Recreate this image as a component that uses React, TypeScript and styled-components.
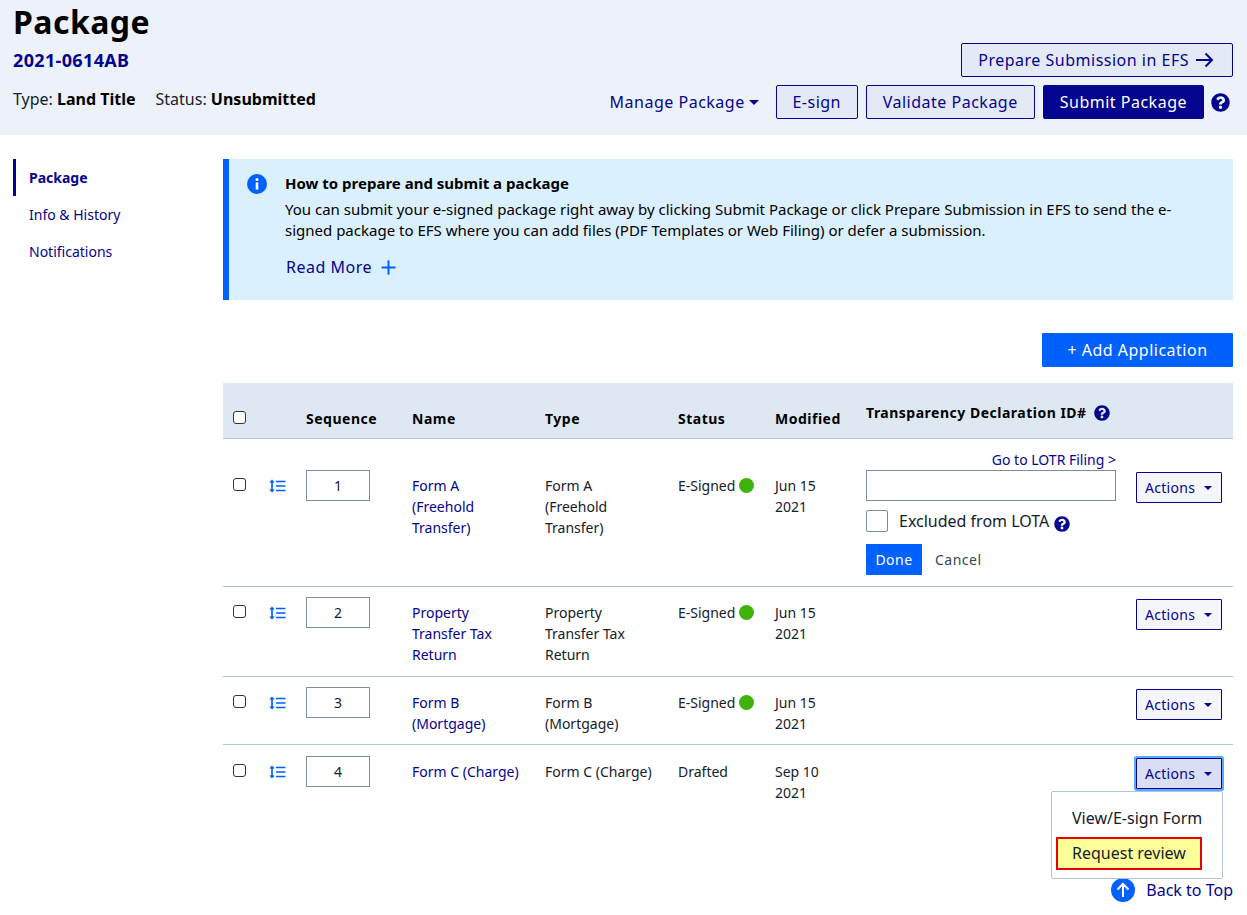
import styled, { createGlobalStyle } from 'styled-components';
import { Plus } from 'lucide-react';
import { FaQuestionCircle } from 'react-icons/fa';

const navy = '#04048f';
const blue = '#0061ff';
const rule = '#aec6d8';

const GlobalStyle = createGlobalStyle`
  html, body { margin: 0; padding: 0; background: #fff; }
  body {
    font-family: "Noto Sans", "Liberation Sans", sans-serif;
    font-size: 14px;
    line-height: 21px;
    color: #15202b;
    overflow: hidden;
  }
  * { box-sizing: border-box; }
`;

const Page = styled.div`
  width: 1247px;
  height: 915px;
`;

const Header = styled.header`
  display: flex;
  justify-content: space-between;
  height: 135px;
  padding: 0 14px 0 13px;
  background: #edf2fa;
`;

const Title = styled.h1`
  margin: 0;
  font-size: 32px;
  line-height: 44px;
  font-weight: 700;
  letter-spacing: 0.45px;
  color: #000;
`;

const PackageId = styled.div`
  margin-top: 4px;
  font-size: 18px;
  line-height: 24px;
  font-weight: 700;
  letter-spacing: 0.35px;
  color: ${navy};
`;

const Meta = styled.div`
  display: flex;
  gap: 20px;
  margin-top: 15px;
  font-size: 16px;
  line-height: 24px;
  color: #15202b;
  b { color: #000; }
`;

const HeaderActions = styled.div`
  display: flex;
  flex-direction: column;
  align-items: flex-end;
  gap: 8px;
  padding-top: 43px;
`;

const ButtonRow = styled.div`
  display: flex;
  align-items: center;
  gap: 8px;
`;

const Button = styled.button<{ $solid?: boolean }>`
  display: inline-flex;
  align-items: center;
  justify-content: center;
  gap: 7px;
  height: 34px;
  padding: 0 16px;
  border: 1px solid ${navy};
  border-radius: 2px;
  background: ${(p) => (p.$solid ? navy : '#e4eaf5')};
  color: ${(p) => (p.$solid ? '#fff' : navy)};
  font: inherit;
  font-size: 16px;
  letter-spacing: 0.5px;
`;

const ESignButton = styled(Button)`
  width: 82px;
  padding: 0;
`;

const Caret = styled.span`
  display: inline-block;
  width: 0;
  height: 0;
  border-left: 5px solid transparent;
  border-right: 5px solid transparent;
  border-top: 5px solid currentColor;
`;

const ManageLink = styled.a`
  display: inline-flex;
  align-items: center;
  gap: 4px;
  margin-right: 9px;
  color: ${navy};
  font-size: 16px;
  letter-spacing: 0.5px;
`;

const HelpIcon = styled(FaQuestionCircle)<{ $size: number }>`
  flex: none;
  width: ${(p) => p.$size}px;
  height: ${(p) => p.$size}px;
  color: ${navy};
`;

const MainHelp = styled.span`
  display: inline-flex;
  margin: 0 3px 0 -1px;
`;

const Body = styled.div`
  display: flex;
  padding: 24px 14px 0 13px;
`;

const Sidebar = styled.nav`
  flex: none;
  width: 210px;
  display: flex;
  flex-direction: column;
`;

const SideItem = styled.a<{ $active?: boolean }>`
  display: flex;
  align-items: center;
  height: 37px;
  padding-left: ${(p) => (p.$active ? 13 : 16)}px;
  border-left: ${(p) => (p.$active ? `3px solid ${navy}` : 'none')};
  color: ${navy};
  font-weight: ${(p) => (p.$active ? 700 : 400)};
`;

const Content = styled.main`
  flex: 1;
  min-width: 0;
`;

const Alert = styled.section`
  display: flex;
  gap: 18px;
  height: 141px;
  padding: 14px 24px 0 18px;
  border-left: 6px solid ${blue};
  background: #dbf0ff;
  color: #000;
  font-size: 15px;
`;

const AlertIcon = styled.svg`
  flex: none;
  width: 20px;
  height: 20px;
  margin-top: 1px;
`;

const AlertTitle = styled.div`
  font-weight: 700;
`;

const AlertText = styled.p`
  margin: 5px 0 0;
`;

const ReadMore = styled.a`
  display: inline-flex;
  align-items: center;
  gap: 6px;
  margin: 14px 0 0 1px;
  color: ${navy};
  font-size: 16px;
  line-height: 24px;
  letter-spacing: 0.5px;
  svg { color: ${blue}; }
`;

const Toolbar = styled.div`
  display: flex;
  justify-content: flex-end;
  margin: 33px 0 16px;
`;

const AddButton = styled.button`
  width: 191px;
  height: 34px;
  border: none;
  border-radius: 1px;
  background: ${blue};
  color: #fff;
  font: inherit;
  font-size: 16px;
  letter-spacing: 0.5px;
`;

const columns = '46px 37px 106px 133px 133px 97px 91px 270px 97px';

const HeadRow = styled.div`
  display: grid;
  grid-template-columns: ${columns};
  height: 56px;
  padding-top: 25px;
  background: #dee8f3;
  border-bottom: 1px solid ${rule};
  font-weight: 700;
  letter-spacing: 0.5px;
  color: #000;
`;

const DeclarationHead = styled.div`
  grid-column: span 2;
  display: flex;
  align-items: center;
  gap: 7px;
  height: 21px;
  margin-top: -6px;
`;

const Row = styled.div<{ $top?: number; $bottom?: number; $last?: boolean }>`
  position: relative;
  display: grid;
  grid-template-columns: ${columns};
  padding: ${(p) => p.$top ?? 10}px 0 ${(p) => p.$bottom ?? 11}px;
  border-bottom: ${(p) => (p.$last ? 'none' : `1px solid ${rule}`)};
`;

const Check = styled.input.attrs({ type: 'checkbox' })`
  appearance: none;
  display: block;
  width: 13px;
  height: 13px;
  margin: 8px 0 0 10px;
  border: 1px solid #333;
  border-radius: 3px;
  background: #fff;
`;

const HeadCheck = styled(Check)`
  margin-top: 3px;
`;

const SortIcon = styled.svg`
  display: block;
  width: 17px;
  height: 14px;
  margin-top: 9px;
  color: ${blue};
`;

const SeqInput = styled.input`
  display: block;
  width: 64px;
  height: 31px;
  border: 1px solid #7a8d9c;
  background: #fff;
  color: #15202b;
  font: inherit;
  text-align: center;
`;

const NameCell = styled.a`
  display: block;
  margin-top: 5px;
  padding-right: 22px;
  color: ${navy};
`;

const TextCell = styled.div`
  margin-top: 5px;
  padding-right: 22px;
`;

const StatusCell = styled(TextCell)`
  display: flex;
  align-items: flex-start;
  gap: 4px;
  padding-right: 0;
`;

const Dot = styled.span`
  flex: none;
  width: 15px;
  height: 15px;
  margin-top: 3px;
  border-radius: 50%;
  background: #3fb30a;
`;

const FilingCell = styled.div`
  margin-top: -21px;
  width: 250px;
`;

const FilingLink = styled.a`
  display: block;
  text-align: right;
  color: ${navy};
`;

const FilingInput = styled.input`
  display: block;
  width: 250px;
  height: 31px;
  border: 1px solid #7a8d9c;
  background: #fff;
`;

const ExcludedRow = styled.label`
  display: flex;
  align-items: center;
  gap: 11px;
  margin-top: 9px;
  height: 22px;
  font-size: 16px;
`;

const BigCheck = styled.input.attrs({ type: 'checkbox' })`
  appearance: none;
  width: 22px;
  height: 22px;
  margin: 0;
  border: 1px solid #7a8d9c;
  border-radius: 2px;
  background: #fff;
`;

const ExcludedHelp = styled.span`
  display: inline-flex;
  margin: 5px 0 0 -6px;
`;

const FormActions = styled.div`
  display: flex;
  align-items: center;
  gap: 13px;
  margin-top: 12px;
`;

const DoneButton = styled.button`
  width: 56px;
  height: 31px;
  border: none;
  background: ${blue};
  color: #fff;
  font: inherit;
  letter-spacing: 0.5px;
`;

const CancelLink = styled.a`
  color: #33475b;
  letter-spacing: 0.5px;
`;

const ActionsButton = styled.button<{ $open?: boolean }>`
  display: flex;
  align-items: center;
  justify-content: space-between;
  width: 86px;
  height: 31px;
  margin-top: 2px;
  padding: 0 9px 0 8px;
  border: 1px solid ${navy};
  border-radius: 1px;
  background: ${(p) => (p.$open ? '#d9def5' : '#f4f6fc')};
  box-shadow: ${(p) => (p.$open ? '0 0 0 2px #5aa9ff' : 'none')};
  color: ${navy};
  font: inherit;
  letter-spacing: 0.3px;
`;

const SmallCaret = styled(Caret)`
  border-left-width: 4px;
  border-right-width: 4px;
  border-top-width: 4px;
`;

const Menu = styled.div`
  position: absolute;
  top: 46px;
  right: 10px;
  width: 172px;
  height: 88px;
  padding: 14px 0 0 4px;
  border: 1px solid ${rule};
  border-radius: 2px;
  background: #fff;
  font-size: 16px;
  z-index: 2;
`;

const MenuItem = styled.div<{ $flagged?: boolean }>`
  width: 146px;
  height: 33px;
  margin-top: ${(p) => (p.$flagged ? 7 : 0)}px;
  padding-left: ${(p) => (p.$flagged ? 14 : 16)}px;
  line-height: ${(p) => (p.$flagged ? 29 : 24)}px;
  ${(p) => (p.$flagged ? 'border: 2px solid #e8000b; background: #ffff99;' : 'height: 24px;')}
  white-space: nowrap;
`;

const BackToTop = styled.a`
  display: flex;
  justify-content: flex-end;
  align-items: center;
  gap: 11px;
  margin-top: 64px;
  color: ${navy};
  font-size: 16px;
  line-height: 24px;
`;

const Sort = () => (
  <SortIcon viewBox="0 0 17 14" fill="none" stroke="currentColor" strokeWidth="1.7">
    <path d="M3 2v10" />
    <path d="M0.8 3.2 3 0.8l2.2 2.4zM0.8 10.8 3 13.2l2.2-2.4z" fill="currentColor" strokeWidth="0.6" />
    <path d="M7 2.5h9.5M7 7h9.5M7 11.5h9.5" />
  </SortIcon>
);

type Item = { seq: number; name: string; status: string; signed: boolean; modified: string; bottom: number };

const items: Item[] = [
  { seq: 2, name: 'Property Transfer Tax Return', status: 'E-Signed', signed: true, modified: 'Jun 15 2021', bottom: 11 },
  { seq: 3, name: 'Form B (Mortgage)', status: 'E-Signed', signed: true, modified: 'Jun 15 2021', bottom: 10 },
];

const RowStart = ({ seq }: { seq: number }) => (
  <>
    <Check />
    <Sort />
    <SeqInput defaultValue={seq} />
  </>
);

const Actions = ({ open }: { open?: boolean }) => (
  <ActionsButton $open={open}>
    Actions
    <SmallCaret />
  </ActionsButton>
);

const App = () => {
  return (
    <Page>
      <GlobalStyle />
      <Header>
        <div>
          <Title>Package</Title>
          <PackageId>2021-0614AB</PackageId>
          <Meta>
            <span>
              Type: <b>Land Title</b>
            </span>
            <span>
              Status: <b>Unsubmitted</b>
            </span>
          </Meta>
        </div>
        <HeaderActions>
          <Button>
            Prepare Submission in EFS
            <svg width="20" height="16" viewBox="0 0 20 16" fill="none" stroke="currentColor" strokeWidth="2">
              <path d="M0 8h16M9.5 1.5 16 8l-6.5 6.5" />
            </svg>
          </Button>
          <ButtonRow>
            <ManageLink>
              Manage Package
              <Caret />
            </ManageLink>
            <ESignButton>E-sign</ESignButton>
            <Button>Validate Package</Button>
            <Button $solid>Submit Package</Button>
            <MainHelp>
              <HelpIcon $size={19} />
            </MainHelp>
          </ButtonRow>
        </HeaderActions>
      </Header>
      <Body>
        <Sidebar>
          <SideItem $active>Package</SideItem>
          <SideItem>Info &amp; History</SideItem>
          <SideItem>Notifications</SideItem>
        </Sidebar>
        <Content>
          <Alert>
            <AlertIcon viewBox="0 0 20 20">
              <circle cx="10" cy="10" r="10" fill={blue} />
              <circle cx="10" cy="5.6" r="1.5" fill="#fff" />
              <rect x="8.7" y="8.4" width="2.6" height="7.2" fill="#fff" />
            </AlertIcon>
            <div>
              <AlertTitle>How to prepare and submit a package</AlertTitle>
              <AlertText>
                You can submit your e-signed package right away by clicking Submit Package or click Prepare Submission in EFS to send the e-signed package to EFS where you can add files (PDF Templates or Web Filing) or defer a submission.
              </AlertText>
              <ReadMore>
                Read More
                <Plus size={21} strokeWidth={2.3} />
              </ReadMore>
            </div>
          </Alert>
          <Toolbar>
            <AddButton>+ Add Application</AddButton>
          </Toolbar>
          <HeadRow>
            <HeadCheck />
            <span />
            <span>Sequence</span>
            <span>Name</span>
            <span>Type</span>
            <span>Status</span>
            <span>Modified</span>
            <DeclarationHead>
              Transparency Declaration ID#
              <HelpIcon $size={16} />
            </DeclarationHead>
          </HeadRow>
          <Row $top={31}>
            <RowStart seq={1} />
            <NameCell>Form A (Freehold Transfer)</NameCell>
            <TextCell>Form A (Freehold Transfer)</TextCell>
            <StatusCell>
              E-Signed
              <Dot />
            </StatusCell>
            <TextCell>Jun 15 2021</TextCell>
            <FilingCell>
              <FilingLink>Go to LOTR Filing &gt;</FilingLink>
              <FilingInput />
              <ExcludedRow>
                <BigCheck />
                Excluded from LOTA
                <ExcludedHelp>
                  <HelpIcon $size={16} />
                </ExcludedHelp>
              </ExcludedRow>
              <FormActions>
                <DoneButton>Done</DoneButton>
                <CancelLink>Cancel</CancelLink>
              </FormActions>
            </FilingCell>
            <Actions />
          </Row>
          {items.map((item) => (
            <Row key={item.seq} $bottom={item.bottom}>
              <RowStart seq={item.seq} />
              <NameCell>{item.name}</NameCell>
              <TextCell>{item.name}</TextCell>
              <StatusCell>
                {item.status}
                {item.signed && <Dot />}
              </StatusCell>
              <TextCell>{item.modified}</TextCell>
              <span />
              <Actions />
            </Row>
          ))}
          <Row $top={11} $last>
            <RowStart seq={4} />
            <NameCell>Form C (Charge)</NameCell>
            <TextCell>Form C (Charge)</TextCell>
            <StatusCell>Drafted</StatusCell>
            <TextCell>Sep 10 2021</TextCell>
            <span />
            <Actions open />
            <Menu>
              <MenuItem>View/E-sign Form</MenuItem>
              <MenuItem $flagged>Request review</MenuItem>
            </Menu>
          </Row>
          <BackToTop>
            <svg width="24" height="24" viewBox="0 0 24 24" fill="none">
              <circle cx="12" cy="12" r="12" fill={blue} />
              <path d="M12 19V6M6.5 11.5 12 6l5.5 5.5" stroke="#fff" strokeWidth="2" />
            </svg>
            Back to Top
          </BackToTop>
        </Content>
      </Body>
    </Page>
  );
};

export default App;
